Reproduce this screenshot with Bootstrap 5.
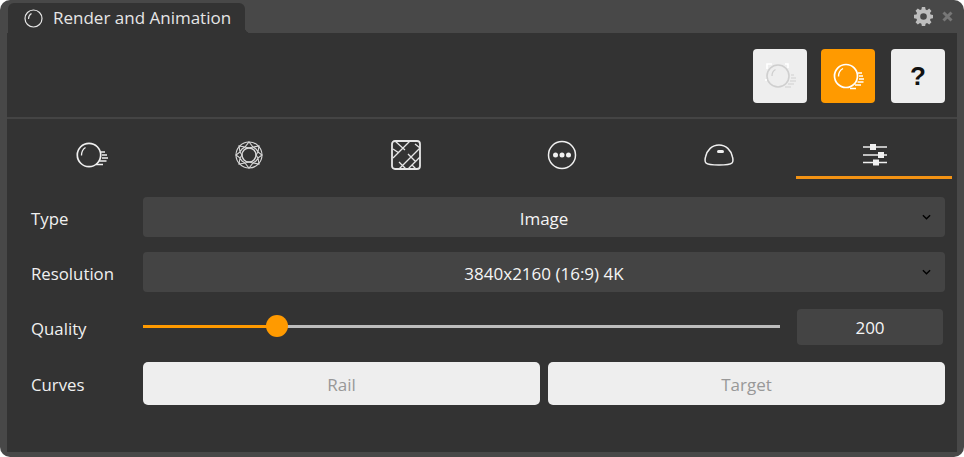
<!DOCTYPE html>
<html lang="en">
<head>
  <meta charset="UTF-8" />
  <title>Render and Animation</title>
  <link href="https://cdn.jsdelivr.net/npm/bootstrap@5.3.3/dist/css/bootstrap.min.css" rel="stylesheet" />
  <style>
    html, body { margin: 0; padding: 0; background: #fff; height: 457px; overflow: hidden; }
    body { font-family: "Open Sans", "Noto Sans", sans-serif; color: #f2f2f2; }
    .app-window {
      width: 964px; height: 457px;
      background: #484848;
      border-radius: 10px;
      padding: 0 7px 5px 7px;
      display: flex; flex-direction: column;
    }
    .title-strip { height: 33px; }
    .title-tab {
      position: relative;
      margin-top: 3px; margin-left: 1px; width: 237px; height: 30px;
      background: #333; border-radius: 6px 6px 0 0;
      padding-left: 15px; gap: 9px; font-size: 17px; color: #e6e6e6;
    }
    .title-tab::after {
      content: ""; position: absolute; left: 100%; bottom: 0; width: 6px; height: 6px;
      background: radial-gradient(circle at 100% 0, transparent 6px, #333 6.5px);
    }
    .win-tools { gap: 9px; padding-right: 4px; }
    .panel-body { background: #333; flex: 1 1 auto; min-height: 0; }
    .top-tools { height: 86px; padding: 16px 12px 0 0; gap: 14px; border-bottom: 2px solid #444; }
    .tool-btn {
      width: 54px; height: 54px; padding: 0; border: 0; border-radius: 4px;
      background: #eee; display: flex; align-items: center; justify-content: center;
    }
    .tool-btn.is-on { background: #ff9a00; }
    .tool-help { color: #111; font-family: "Liberation Sans", sans-serif; font-size: 26px; font-weight: 700; margin-left: 2px; }
    .mode-tabs { padding-left: 6px; height: 60px; flex-wrap: nowrap; }
    .mode-tabs .nav-item { width: 156.5px; }
    .mode-tabs .nav-link {
      height: 60px; width: 100%; padding: 14px 0 0 3px; border: 0; border-radius: 0;
      background: none; display: flex; align-items: center; justify-content: center;
      border-bottom: 3px solid transparent;
    }
    .mode-tabs .nav-link.active { background: none; border-bottom-color: #f39314; }
    .setting-rows { padding: 18px 12px 0 24px; }
    .setting-row { display: flex; align-items: center; }
    .setting-label { width: 112px; flex: none; font-size: 16.8px; color: #f0f0f0; padding-top: 3px; }
    .dark-select {
      height: 40px; padding: 3px 30px 0; border: 0; border-radius: 4px;
      background-color: #444; color: #f5f5f5; font-size: 17px; text-align: center;
      text-align-last: center; font-family: inherit;
      background-image: url("data:image/svg+xml,%3csvg xmlns='http://www.w3.org/2000/svg' viewBox='0 0 10 6'%3e%3cpath fill='none' stroke='%23000' stroke-width='1.5' d='M1 1l4 4 4-4'/%3e%3c/svg%3e");
      background-size: 9px 6px; background-position: right 14px center;
    }
    .dark-select:focus { background-color: #444; color: #f5f5f5; box-shadow: none; }
    .gap-type { margin-bottom: 15px; }
    .gap-res { margin-bottom: 17px; }
    .gap-quality { margin-bottom: 17px; height: 36px; }
    .quality-range { width: 637px; height: 22px; flex: none; margin-right: 17px; margin-top: -2px; display: block; }
    .quality-range::-webkit-slider-runnable-track {
      height: 3px; border-radius: 0;
      background: linear-gradient(to right, #ff9a00 134px, #bdbdbd 134px);
    }
    .quality-range::-webkit-slider-thumb {
      width: 22px; height: 22px; margin-top: -9.5px; border-radius: 50%; background: #ff9a00; border: 0;
    }
    .quality-value {
      width: 146px; height: 36px; padding: 0; border: 0; border-radius: 4px;
      background: #444; color: #f5f5f5; font-size: 17px; text-align: center; font-family: inherit;
    }
    .quality-value:focus { background: #444; color: #f5f5f5; box-shadow: none; }
    .curve-btns { flex: 1 1 auto; gap: 8px; }
    .curve-btn {
      flex: 1 1 0; height: 43px; padding: 2px 0 0; border: 0; border-radius: 5px;
      background: #eee; color: #989898; font-size: 17px; font-family: inherit;
    }
    .curve-btn:disabled { background: #eee; color: #989898; opacity: 1; }
    svg { display: block; }
  </style>
</head>
<body>
  <div class="app-window">
    <div class="title-strip d-flex justify-content-between">
      <div class="title-tab d-flex align-items-center">
        <svg width="21" height="21" viewBox="0 0 21 21" fill="none" stroke="#e6e6e6"><circle cx="10.500" cy="10.500" r="8.500" stroke-width="1.200"/><path d="M5.500 11c0-2.500 1-4.300 3-5.500" stroke-width="1.100"/></svg>
        <span>Render and Animation</span>
      </div>
      <div class="win-tools d-flex align-items-center">
        <svg width="19" height="19" viewBox="0 0 20 20"><path fill="#bdbdbd" fill-rule="evenodd" d="M8.300 0h3.400l.5 2.700 1.500.6 2.300-1.600 2.400 2.400-1.600 2.300.6 1.500 2.700.5v3.400l-2.700.5-.6 1.500 1.600 2.300-2.400 2.400-2.300-1.600-1.500.6-.5 2.700H8.300l-.5-2.700-1.500-.6-2.300 1.600-2.400-2.400 1.600-2.300-.6-1.500L-.1 11.700V8.300l2.700-.5.6-1.500-1.600-2.300 2.400-2.400 2.300 1.600 1.500-.6zM10 6.500a3.500 3.500 0 1 0 0 7 3.500 3.500 0 0 0 0-7z"/></svg>
        <svg width="11" height="11" viewBox="0 0 11 11"><path stroke="#777" stroke-width="3" d="M1.500 1.500l8 8m0-8l-8 8"/></svg>
      </div>
    </div>

    <div class="panel-body d-flex flex-column">
      <div class="top-tools d-flex justify-content-end">
        <button class="tool-btn" type="button">
          <svg width="34" height="34" viewBox="0 0 34 34" fill="none" stroke="#cfcfcf"><circle cx="15" cy="17" r="11" stroke-width="1.600"/><path d="M9 17c0-3 1.500-5.500 3.500-6.500" stroke-width="1.300"/><path d="M28 16h3M28 19h5M27 22h6M25 25h6M22 28h6" stroke-width="1.200"/><path stroke="#fff" stroke-width="1.600" d="M4 10V5h5M22 5h3v4M3 20v2"/></svg>
        </button>
        <button class="tool-btn is-on" type="button">
          <svg width="34" height="34" viewBox="0 0 34 34" fill="none" stroke="#fff"><circle cx="15" cy="17" r="11.500" stroke-width="1.700"/><path d="M7.500 17.500c0-4 1.700-6.500 4.500-8" stroke-width="1.400"/><path d="M27 14h4M28 17h4M28 20h5M26.500 23h6M24 26h6M19 29.500h6" stroke-width="1.600"/></svg>
        </button>
        <button class="tool-btn tool-help" type="button">?</button>
      </div>

      <ul class="nav mode-tabs">
        <li class="nav-item"><button class="nav-link" type="button">
          <svg width="33" height="26" viewBox="0 0 33 26" fill="none" stroke="#f0f0f0"><circle cx="13" cy="13" r="11.700" stroke-width="1.700"/><path d="M5.500 13.500c0-4 1.500-6.500 4-8" stroke-width="1.300"/><path d="M25 10h4M26 13h5M26 16h6M23.500 19h7M20 22.500h7" stroke-width="1.500"/></svg>
        </button></li>
        <li class="nav-item"><button class="nav-link" type="button">
          <svg width="28" height="28" viewBox="0 0 28 28" fill="none" stroke="#d8d8d8" stroke-width="1.100"><circle cx="14" cy="14" r="13"/><circle cx="14" cy="14" r="7" stroke-width="1.400"/><path d="M14 1l4 5 6-1-1 6 4 3-4 3 1 6-6-1-4 5-4-5-6 1 1-6-4-3 4-3-1-6 6 1zM10 6l4 1 4-1M23 11l-2 3 2 3M18 22l-4-1-4 1M5 17l2-3-2-3M10 6l-3 2-2 3M18 6l3 2 2 3M23 17l-2 3-3 2M5 17l2 3 3 2"/></svg>
        </button></li>
        <li class="nav-item"><button class="nav-link" type="button">
          <svg width="30" height="30" viewBox="0 0 30 30" fill="none" stroke="#e6e6e6"><rect x="1" y="1" width="28" height="28" rx="3" stroke-width="1.800"/><path stroke-width="1.300" d="M2 18L19 1M8 29L29 8M17 29L29 17M4 1l10 9M2 9l6 4M17 14l8 8M8 22l7 7M24 4l5 4M21 25l4 4"/></svg>
        </button></li>
        <li class="nav-item"><button class="nav-link" type="button">
          <svg width="30" height="30" viewBox="0 0 30 30"><circle cx="15" cy="15" r="13.500" fill="none" stroke="#f0f0f0" stroke-width="1.500"/><circle cx="8.500" cy="15" r="2.500" fill="#f0f0f0"/><circle cx="15" cy="15" r="2.500" fill="#f0f0f0"/><circle cx="21.500" cy="15" r="2.500" fill="#f0f0f0"/></svg>
        </button></li>
        <li class="nav-item"><button class="nav-link" type="button">
          <svg width="30" height="24" viewBox="0 0 30 24" fill="none" stroke="#f0f0f0"><path stroke-width="1.500" d="M2 20c-1-1-1-4-.5-6C3 7 8 2 15 2s12 5 13.500 12c.5 2 .5 5-.5 6-1 1-7 2-13 2S3 21 2 20z"/><rect x="13" y="7" width="7" height="3" rx="1.500" fill="#f0f0f0" stroke="none"/></svg>
        </button></li>
        <li class="nav-item"><button class="nav-link active" type="button">
          <svg width="26" height="22" viewBox="0 0 26 22" fill="#f0f0f0"><path stroke="#f0f0f0" stroke-width="1.300" d="M1 3h24M1 11h24M1 18.500h24"/><rect x="8" y="0" width="6" height="6"/><rect x="16" y="8" width="6" height="6"/><rect x="11" y="15.500" width="6" height="6"/></svg>
        </button></li>
      </ul>

      <div class="setting-rows">
        <div class="setting-row gap-type">
          <label class="setting-label">Type</label>
          <select class="form-select dark-select"><option>Image</option></select>
        </div>
        <div class="setting-row gap-res">
          <label class="setting-label">Resolution</label>
          <select class="form-select dark-select"><option>3840x2160 (16:9) 4K</option></select>
        </div>
        <div class="setting-row gap-quality">
          <label class="setting-label">Quality</label>
          <input type="range" class="form-range quality-range" min="0" max="1000" value="200" />
          <input type="text" class="form-control quality-value" value="200" />
        </div>
        <div class="setting-row">
          <label class="setting-label">Curves</label>
          <div class="curve-btns d-flex">
            <button class="btn curve-btn" type="button" disabled>Rail</button>
            <button class="btn curve-btn" type="button" disabled>Target</button>
          </div>
        </div>
      </div>
    </div>
  </div>
</body>
</html>
